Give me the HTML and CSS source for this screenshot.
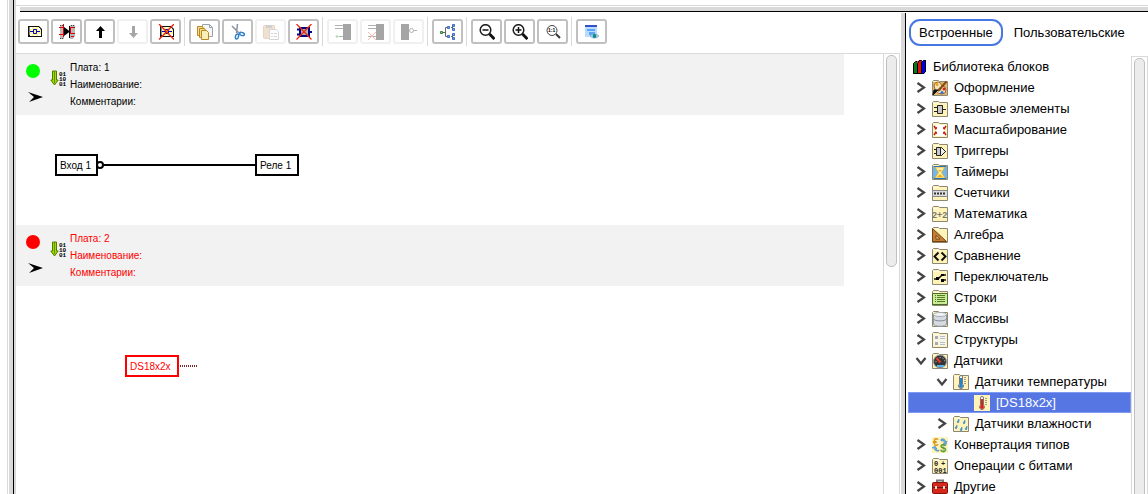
FILE: index.html
```html
<!DOCTYPE html>
<html lang="ru">

<head>
  <meta charset="UTF-8">
  <meta name="viewport" content="width=device-width, initial-scale=1.0">
  <title>Библиотека блоков</title>
  <link rel="stylesheet" href="styles.css">
</head>

<body>
  <!-- shared icon parts -->
  <svg class="defs" aria-hidden="true">
    <symbol id="folder" viewBox="0 0 16 16">
      <path d="M.5 15.5V1.5L1.5.5h5l1 1h8v14z" fill="#fff3b8" stroke="#8c8874" />
      <path d="M1.5 2.5h6" stroke="#fffbe6" />
    </symbol>
    <symbol id="board" viewBox="0 0 16 16">
      <path d="M2 2h11l3 3v8H2z" fill="#111" />
      <path d="M3 4h1M3 6h1M3 8h1M3 10h1M14 6h1M14 8h1M14 10h1" stroke="#fff" />
      <path d="M4 3h9v1l2 2v6H4z" fill="#fff6a0" />
      <path d="M4 3h2v2H4zM8 3h2v1H8zM12 4h2v2h-2zM4 10h2v2H4zM8 11h2v1H8zM12 10h3v2h-3z" fill="#fff" />
      <path d="M4 7.5h3M11 7.5h3M7.5 5.5h3v4h-3z" fill="none" stroke="#0000b8" />
    </symbol>
    <symbol id="download" viewBox="0 0 17 16">
      <path d="M2.500 1v9H.8L4.500 15l3.700-5H6.500V1z" fill="#a4dc00" stroke="#4b7d00" />
      <path d="M4.500 1v12" stroke="#5d9400" />
    </symbol>
    <symbol id="arrow" viewBox="0 0 15 10">
      <path d="M0 0l15 5L1 10l5-5z" />
    </symbol>
    <symbol id="closed" viewBox="0 0 16 16">
      <path d="M4.500 3L11 7.500 4.500 12" fill="none" stroke="#444" stroke-width="2.200" />
    </symbol>
    <symbol id="opened" viewBox="0 0 16 16">
      <path d="M3.500 5L8 10.500 12.500 5" fill="none" stroke="#444" stroke-width="2.200" />
    </symbol>
    <symbol id="lens" viewBox="0 0 16 16">
      <circle cx="6.500" cy="6" r="5.300" fill="#fff" stroke="#1b1b1b" stroke-width="1.500" />
      <path d="M10.500 10l5 5" stroke="#111" stroke-width="3" />
    </symbol>
    <symbol id="thermo" viewBox="0 0 16 16">
      <path d="M6.500 10V3a1.500 1.500 0 013 0v7a2.500 2.500 0 11-3 0z" fill="#fff" stroke="#777" />
      <path d="M8 4v7" stroke="currentColor" stroke-width="2" />
      <circle cx="8" cy="12" r="2" fill="currentColor" />
      <path d="M11 3.500h2M11 5.500h2M11 7.500h2M11 9.500h2" stroke="#999" />
    </symbol>
  </svg>

  <div class="rail"></div>
  <div class="page">
    <div class="top-edge"></div>
    <div class="content">
      <main class="workspace">
        <div class="toolbar">
          <div class="group">
            <button class="tool" aria-label="Добавить плату"><svg viewBox="0 0 16 16"><use href="#board" /></svg></button>
            <button class="tool" aria-label="Вставить плату">
              <svg viewBox="0 0 16 16">
                <path d="M1 1h4v5l-1 3 1 2v4H1zM11 1h5v11l-2 3h-3z" fill="#b8b8b8" />
                <path d="M1 1.500h4M1 14.500h3M12 1.500h3" stroke="#444" stroke-dasharray="1 1" />
                <path d="M5 3l6 4.500L5 12z" fill="#000" />
                <path d="M10.500 2v12" stroke="#000" />
                <path d="M4.500 0v13M0 3.500h4M0 10.500h4M16 3.500h-4.500v6H16M12 12.500h3" fill="none" stroke="#e00000" />
              </svg>
            </button>
            <button class="tool" aria-label="Вверх"><svg viewBox="0 0 16 16"><path d="M8.500 2l4.500 5h-3v7H7V7H4z" /></svg></button>
            <button class="tool" aria-label="Вниз" disabled><svg viewBox="0 0 16 16"><path d="M7 2h3v7h3l-4.500 5L4 9h3z" /></svg></button>
            <button class="tool" aria-label="Удалить плату">
              <svg viewBox="0 0 16 16"><use href="#board" /><path d="M1 0l15 15.500M16 0L1 15.500" stroke="#f02010" stroke-width="1.300" /></svg>
            </button>
          </div>
          <div class="group">
            <button class="tool" aria-label="Копировать">
              <svg viewBox="0 0 16 16">
                <path d="M5.500.5h7l3 3v9h-10z" fill="#f4f6f8" stroke="#9aa3ab" />
                <path d="M12.500.5v3h3" fill="none" stroke="#9aa3ab" />
                <path d="M.5 2.500h5l1 2v7h-6z" fill="#f6df8c" stroke="#b98822" />
                <path d="M2.500 4.500h5l1 2v7h-6z" fill="#f6df8c" stroke="#b98822" />
                <path d="M4.500 6.500h5l2 2v7h-7z" fill="#fbeeb4" stroke="#b98822" />
              </svg>
            </button>
            <button class="tool" aria-label="Вырезать">
              <svg viewBox="0 0 16 16">
                <path d="M2 2l7 7M7.500 0l-1 9" stroke="#8994a0" stroke-width="1.500" />
                <ellipse cx="12" cy="10" rx="2.500" ry="1.500" fill="none" stroke="#2f7fc8" stroke-width="1.500" transform="rotate(20 12 10)" />
                <ellipse cx="7" cy="12.500" rx="1.500" ry="2.500" fill="none" stroke="#2f7fc8" stroke-width="1.500" transform="rotate(15 7 12.500)" />
              </svg>
            </button>
            <button class="tool" aria-label="Вставить" disabled>
              <svg viewBox="0 0 16 16">
                <rect x=".5" y="1.500" width="11" height="13" rx="1" fill="#d7a878" stroke="#b98550" />
                <path d="M3 1h6v3H3z" fill="#777" />
                <path d="M6.500 5.500h7l2 2v8h-9z" fill="#fff" stroke="#888" />
                <path d="M8 9.500h2m1 0h3M8 12.500h2m1 0h3" stroke="#888" />
              </svg>
            </button>
            <button class="tool" aria-label="Удалить блок">
              <svg viewBox="0 0 16 16">
                <path d="M1 5.500h3M1 10.500h3M12 8h4" stroke="#000080" stroke-width="2" />
                <rect x="4" y="4" width="9" height="8" fill="#b0b0b0" stroke="#000080" stroke-width="2" />
                <path d="M.5 0l15 15.500M15.500 0L.5 15.500" stroke="#f02810" stroke-width="1.300" />
              </svg>
            </button>
          </div>
          <div class="group">
            <button class="tool" aria-label="Добавить вход" disabled>
              <svg viewBox="0 0 16 16"><path d="M8 0h8v16H8z" /><path d="M0 1.500h8M0 4.500h8M4 12.500h4" stroke="#222" /><path d="M.5 12.500h3M2 11v3" stroke="#1a8a1a" /></svg>
            </button>
            <button class="tool" aria-label="Удалить вход" disabled>
              <svg viewBox="0 0 16 16"><path d="M8 0h8v16H8z" /><path d="M0 1.500h8M0 4.500h8M0 12.500h8" stroke="#222" /><path d="M0 8l8 8M8 8l-8 8" stroke="#f03010" /></svg>
            </button>
            <button class="tool" aria-label="Инверсия" disabled>
              <svg viewBox="0 0 16 16"><path d="M0 0h8v16H0z" /><circle cx="10.500" cy="6.500" r="2" fill="#fff" stroke="#222" /><path d="M13 6.500h3" stroke="#222" /></svg>
            </button>
          </div>
          <div class="group">
            <button class="tool" aria-label="Структура">
              <svg viewBox="0 0 16 16">
                <path d="M3 8.500h2M9 3.500H5.500v9H9M12.500 2v4M12.500 10v5M11 3.500h1.500M11 12.500h1.500" fill="none" stroke="#666" />
                <path d="M.5 7.500h2v2h-2z" fill="#9c9" stroke="#2b8a3e" />
                <path d="M7.500 2.500h2v2h-2zM7.500 11.500h2v2h-2zM12.500.5h2v2h-2zM12.500 4.500h2v2h-2zM12.500 9.500h2v2h-2zM12.500 13.500h2v2h-2z" fill="#7fa8e8" stroke="#3a6cc0" />
              </svg>
            </button>
          </div>
          <div class="group">
            <button class="tool" aria-label="Уменьшить"><svg viewBox="0 0 16 16"><use href="#lens" /><path d="M3.500 6h6" stroke="#111" stroke-width="1.500" /></svg></button>
            <button class="tool" aria-label="Увеличить"><svg viewBox="0 0 16 16"><use href="#lens" /><path d="M3.500 6h6M6.500 3v6" stroke="#111" stroke-width="1.500" /></svg></button>
            <button class="tool" aria-label="Масштаб 1:1">
              <svg viewBox="0 0 16 16"><circle cx="7" cy="6.500" r="5" fill="#fff" stroke="#444" /><path d="M11 10l4 4" stroke="#333" stroke-width="2" /><text x="3" y="8" class="ratio">1:1</text></svg>
            </button>
          </div>
          <div class="group">
            <button class="tool" aria-label="Просмотр">
              <svg viewBox="0 0 16 16">
                <path d="M1 1h12v12H1z" fill="#b9dcff" /><path d="M1 1h12v2H1z" fill="#3550c8" />
                <path d="M3 5h8v2H3zM5 8h6v3H5z" fill="#58a6f5" />
                <path d="M6 12q4.500-4 9 0q-4.500 4-9 0" fill="#d7ecec" stroke="#8ab" /><circle cx="10.500" cy="12" r="2" fill="#078b94" />
              </svg>
            </button>
          </div>
        </div>

        <div class="canvas">
          <div class="boards">
            <section class="board">
              <header class="board-head">
                <div class="state"><span class="lamp"></span><svg class="pointer"><use href="#arrow" /></svg></div>
                <svg class="load" viewBox="0 0 17 16"><use href="#download" /><text x="9" y="6">01</text><text x="9" y="11">10</text><text x="9" y="16">01</text></svg>
                <div class="info"><p>Плата: 1</p><p>Наименование:</p><p>Комментарии:</p></div>
              </header>
              <div class="scheme">
                <div class="node input">Вход 1</div>
                <div class="wire"></div>
                <div class="inverter"></div>
                <div class="node relay">Реле 1</div>
              </div>
            </section>
            <section class="board error">
              <header class="board-head">
                <div class="state"><span class="lamp"></span><svg class="pointer"><use href="#arrow" /></svg></div>
                <svg class="load" viewBox="0 0 17 16"><use href="#download" /><text x="9" y="6">01</text><text x="9" y="11">10</text><text x="9" y="16">01</text></svg>
                <div class="info"><p>Плата: 2</p><p>Наименование:</p><p>Комментарии:</p></div>
              </header>
              <div class="scheme">
                <div class="node sensor">DS18x2x</div>
                <div class="stub"></div>
              </div>
            </section>
          </div>
          <div class="scroll"><div class="thumb"></div></div>
        </div>
      </main>

      <div class="splitter"></div>

      <aside class="library">
        <nav class="tabs">
          <button class="tab active">Встроенные</button>
          <button class="tab">Пользовательские</button>
        </nav>
        <div class="tree-wrap">
          <ul class="tree">
            <li><button class="row root">
              <svg class="icon" viewBox="0 0 16 16"><path d="M1 5l2-2h2v11l-3 1H1z" fill="#087818" /><path d="M5 4l2-3h3v12l-2 2H5z" fill="#e01010" /><path d="M9 3l3-2h2v11l-2 3H9z" fill="#0000e8" /><path d="M1.500 14.500v-10l2-2h2M5.500 14.500v-10l2-3h2M9.500 14.500V3.500l2-2h2v11l-2 2h-10" fill="none" stroke="#000" /></svg>
              Библиотека блоков</button></li>
            <li><button class="row"><svg class="fold"><use href="#closed" /></svg>
              <svg class="icon" viewBox="0 0 16 16"><use href="#folder" /><path d="M1 2h14v13H1z" fill="#dfb777" /><path d="M2 5q1-3 4-3t4 4q4 0 4 4t-4 4q-4 0-6-3t-2-6" fill="#f6e1ba" stroke="#9a6a2a" /><circle cx="8" cy="9" r="1.500" fill="#27a12e" /><circle cx="12" cy="9" r="1.500" fill="#e02020" /><circle cx="10" cy="12.500" r="1.500" fill="#2b70d8" /><circle cx="5" cy="4.500" r="1.500" fill="#f0a010" /><path d="M14.500 1.500L6 11" stroke="#8b4a12" stroke-width="2" /><path d="M6 10l-5 5 1-5z" fill="#111" stroke="#111" /></svg>
              Оформление</button></li>
            <li><button class="row"><svg class="fold"><use href="#closed" /></svg>
              <svg class="icon" viewBox="0 0 16 16"><use href="#folder" /><path d="M2 6.500h4M2 10.500h4M10 8.500h4" stroke="#222" /><path d="M5.500 4.500h5v8h-5z" fill="#c8c8c8" stroke="#222" /></svg>
              Базовые элементы</button></li>
            <li><button class="row"><svg class="fold"><use href="#closed" /></svg>
              <svg class="icon" viewBox="0 0 16 16"><use href="#folder" /><path d="M4 3h9v11H4z" fill="#fff" /><path d="M2 4l2 3M14 4l-2 3M2 13l2-3M14 13l-2-3" stroke="#c01818" stroke-width="1.500" /><path d="M4.500 5v2H3M11.500 5v2H13M4.500 12v-2H3M11.500 12v-2H13" fill="none" stroke="#d03030" /></svg>
              Масштабирование</button></li>
            <li><button class="row"><svg class="fold"><use href="#closed" /></svg>
              <svg class="icon" viewBox="0 0 16 16"><use href="#folder" /><path d="M2 6.500h3M2 10.500h3M12 8.500h2M4.500 4.500h5v8h-5z" fill="#c8c8c8" stroke="#222" /><path d="M8.500 4.500v8h1l4-4-4-4z" fill="#eee" stroke="#222" /></svg>
              Триггеры</button></li>
            <li><button class="row"><svg class="fold"><use href="#closed" /></svg>
              <svg class="icon" viewBox="0 0 16 16"><use href="#folder" /><path d="M1 2h14v13H1z" fill="#71b6e8" /><path d="M3 3h10L9.500 8.500 13 14H3l3.500-5.500z" fill="#fff0a8" stroke="#e6b32e" /><path d="M2 2.500h12M2 14.500h12" stroke="#2675bb" /><path d="M6 6h4L8 8zM5 13l3-3 3 3z" fill="#efae20" /></svg>
              Таймеры</button></li>
            <li><button class="row"><svg class="fold"><use href="#closed" /></svg>
              <svg class="icon" viewBox="0 0 16 16"><use href="#folder" /><path d="M0 5h16v7H0z" fill="#888" /><path d="M1 6h14v5H1z" fill="#ddd" /><path d="M2 8.500h12" stroke="#333" stroke-width="2" stroke-dasharray="2 1" /></svg>
              Счетчики</button></li>
            <li><button class="row"><svg class="fold"><use href="#closed" /></svg>
              <svg class="icon" viewBox="0 0 16 16"><use href="#folder" /><text x="0" y="12" class="sum">2+2</text></svg>
              Математика</button></li>
            <li><button class="row"><svg class="fold"><use href="#closed" /></svg>
              <svg class="icon" viewBox="0 0 16 16"><use href="#folder" /><path d="M.5 1.500v13h14z" fill="#c47d32" stroke="#75410d" /><path d="M4 8.500V12h4z" fill="#fff3b8" stroke="#75410d" /></svg>
              Алгебра</button></li>
            <li><button class="row"><svg class="fold"><use href="#closed" /></svg>
              <svg class="icon" viewBox="0 0 16 16"><use href="#folder" /><path d="M6.500 4.500l-4 4 4 4M9.500 4.500l4 4-4 4" fill="none" stroke="#111" stroke-width="2" /></svg>
              Сравнение</button></li>
            <li><button class="row"><svg class="fold"><use href="#closed" /></svg>
              <svg class="icon" viewBox="0 0 16 16"><use href="#folder" /><path d="M2 10h4l4-4M10 6h4M10 11h4" fill="none" stroke="#111" stroke-width="1.500" /><path d="M4 8h3v3H4zM9 5h3v2H9zM9 10h3v3H9z" /></svg>
              Переключатель</button></li>
            <li><button class="row"><svg class="fold"><use href="#closed" /></svg>
              <svg class="icon" viewBox="0 0 16 16"><use href="#folder" /><path d="M.5 3.500h15v11H.5z" fill="#cdea98" stroke="#496c26" /><path d="M3 5.500h1m1 0h8M3 7.500h1m1 0h8M3 9.500h1m1 0h8M3 11.500h1m1 0h8" stroke="#4f7e23" /></svg>
              Строки</button></li>
            <li><button class="row"><svg class="fold"><use href="#closed" /></svg>
              <svg class="icon" viewBox="0 0 16 16"><use href="#folder" /><path d="M1.500 3v10c0 3 13 3 13 0V3" fill="#d5dbe1" stroke="#929aa2" /><ellipse cx="8" cy="3.500" rx="6.500" ry="2" fill="#f1f4f7" stroke="#a4abb2" /><path d="M1.500 8c1 2.500 12 2.500 13 0" fill="none" stroke="#858d95" /></svg>
              Массивы</button></li>
            <li><button class="row"><svg class="fold"><use href="#closed" /></svg>
              <svg class="icon" viewBox="0 0 16 16"><use href="#folder" /><path d="M2 3h12v11H2z" fill="#f8f6e8" /><path d="M3 4h3v3H3zM3 10h3v3H3z" fill="#aaa" /><path d="M8 4.500h5M8 6.500h5M8 10.500h5M8 12.500h5" stroke="#b7bec5" /></svg>
              Структуры</button></li>
            <li><button class="row" aria-expanded="true"><svg class="fold"><use href="#opened" /></svg>
              <svg class="icon" viewBox="0 0 16 16"><use href="#folder" /><circle cx="8" cy="8.500" r="6.500" fill="#343638" stroke="#999" /><path d="M4 9a4.500 4.500 0 019 0" fill="none" stroke="#ddd" stroke-dasharray="1 2" /><path d="M8.500 9.500L4.500 5" stroke="#f03a20" stroke-width="2" /><path d="M5 12h7v2H5z" fill="#58b5ee" /></svg>
              Датчики</button></li>
            <li><button class="row level-2" aria-expanded="true"><svg class="fold"><use href="#opened" /></svg>
              <svg class="icon cold" viewBox="0 0 16 16"><use href="#folder" /><use href="#thermo" /></svg>
              Датчики температуры</button></li>
            <li><button class="row level-3 selected">
              <svg class="icon hot" viewBox="0 0 16 16"><path d="M0 0h16v16H0z" fill="#fff3b8" /><use href="#thermo" /></svg>
              [DS18x2x]</button></li>
            <li><button class="row level-2"><svg class="fold"><use href="#closed" /></svg>
              <svg class="icon" viewBox="0 0 16 16"><use href="#folder" /><path d="M6 3l-2 3 1 1 1-1zM12 4l-2 3 1 1 1-1zM4 9l-2 3 1 1 1-1zM9 11l-2 3 1 1 1-1zM14 10l-2 3 1 1 1-1z" fill="#4da3e8" stroke="#2579c4" stroke-width=".5" /></svg>
              Датчики влажности</button></li>
            <li><button class="row"><svg class="fold"><use href="#closed" /></svg>
              <svg class="icon" viewBox="0 0 16 16"><path d="M0 0h16v16H0z" fill="#fff3b8" /><text x="1" y="9" class="euro">€</text><text x="8" y="15" class="dollar">$</text><path d="M9 2q4-1 5 3l1-1-1 4-3-2h2q-1-3-4-2zM7 14q-4 1-5-3H0l3-2 2 3H4q1 2 3 1z" fill="#65aee8" stroke="#3c83bd" stroke-width=".5" /></svg>
              Конвертация типов</button></li>
            <li><button class="row"><svg class="fold"><use href="#closed" /></svg>
              <svg class="icon" viewBox="0 0 16 16"><use href="#folder" /><text x="2" y="8" class="bits">0</text><text x="9" y="8" class="bits">+</text><text x="2" y="15" class="bits">001</text></svg>
              Операции с битами</button></li>
            <li><button class="row"><svg class="fold"><use href="#closed" /></svg>
              <svg class="icon" viewBox="0 0 16 16"><path d="M5 4V1.500h6V4" fill="none" stroke="#777" stroke-width="2" /><rect x=".5" y="3.500" width="15" height="11" rx="1" fill="#d5281b" stroke="#861008" /><path d="M1 8.500h14" stroke="#721009" /><path d="M3 7h2v3H3zM11 7h2v3h-2z" fill="#ddd" /></svg>
              Другие</button></li>
          </ul>
          <div class="scroll"><div class="thumb"></div></div>
        </div>
      </aside>
    </div>
  </div>
</body>

</html>
```
FILE: styles.css
```css
* {
  box-sizing: border-box;
  margin: 0;
  padding: 0;
}

body {
  display: flex;
  height: 100vh;
  overflow: hidden;
  background: #fff;
  color: #000;
  font: 13px/21px "Liberation Sans", Arial, sans-serif;
}

button {
  border: 0;
  background: none;
  color: inherit;
  font: inherit;
}

ul {
  list-style: none;
}

.defs {
  position: absolute;
  width: 0;
  height: 0;
}

/* window edges */
.rail {
  flex: none;
  width: 7px;
  margin-left: 7px;
  border-left: 1px solid #d9d9d9;
  border-right: 1px solid #000;
  background: linear-gradient(90deg, #fff 1px, #d9d9d9 1px);
}

.page {
  display: flex;
  flex: 1;
  flex-direction: column;
  min-width: 0;
  border-left: 2px solid #d9d9d9;
}

.top-edge {
  flex: none;
  height: 7px;
  margin-top: 5px;
  border-top: 1px solid #d9d9d9;
}

.top-edge::after {
  content: '';
  display: block;
  height: 4px;
  margin: 1px 0 0 4px;
  border-bottom: 1px solid #000;
  background: #d9d9d9;
}

.content {
  display: flex;
  flex: 1;
  min-height: 0;
}

.workspace {
  display: flex;
  flex: 1;
  flex-direction: column;
  min-width: 0;
}

.splitter {
  flex: none;
  width: 5px;
  margin: 1px 0 0 1px;
  border-right: 1px solid #000;
  background: #d9d9d9;
}

/* toolbar */
.toolbar {
  display: flex;
  flex: none;
  height: 41px;
  padding: 5px 2px;
}

.group {
  display: flex;
  gap: 2px;
  height: 29px;
  padding: 2px 3px 2px 0;
}

.group + .group {
  padding-left: 4px;
  border-left: 1px solid #d9d9d9;
}

.tool {
  display: flex;
  align-items: center;
  justify-content: center;
  width: 31px;
  height: 25px;
  border: 2px solid #c0c0c0;
  border-radius: 3px;
}

.tool svg {
  width: 16px;
  height: 16px;
}

.tool:disabled {
  border-color: #f0f0f0;
}

.tool:disabled svg {
  opacity: .35;
}

.ratio {
  font: bold 5px "Liberation Sans", Arial, sans-serif;
}

/* boards */
.canvas {
  display: flex;
  flex: 1;
  min-height: 0;
  border-top: 1px solid #d9d9d9;
}

.boards {
  flex: 1;
  overflow: hidden;
}

.board-head {
  display: flex;
  height: 61px;
  margin-right: 39px;
  padding: 5px 8px;
  background: #f2f2f2;
}

.state {
  display: flex;
  flex-direction: column;
  align-items: center;
  gap: 14px;
  width: 18px;
  padding-top: 5px;
}

.lamp {
  width: 14px;
  height: 14px;
  border-radius: 50%;
  background: #0f0;
}

.error .lamp {
  background: #f00;
}

.pointer {
  width: 15px;
  height: 10px;
  margin-left: 4px;
}

.load {
  width: 17px;
  height: 16px;
  margin: 11px 3px 0 8px;
  overflow: visible;
  font: bold 6px "Liberation Mono", monospace;
}

.info {
  font-size: 10px;
  line-height: 17px;
}

.error .info {
  color: #f00;
}

.scheme {
  position: relative;
  height: 110px;
}

.node {
  position: absolute;
  height: 22px;
  padding: 0 3px;
  border: 2px solid #000;
  background: #fff;
  font-size: 10px;
  line-height: 19px;
  white-space: nowrap;
}

.input {
  left: 39px;
  top: 39px;
  width: 43px;
}

.relay {
  left: 239px;
  top: 39px;
  width: 44px;
}

.sensor {
  left: 109px;
  top: 69px;
  width: 54px;
  border-color: #f00;
  color: #f00;
}

.wire {
  position: absolute;
  left: 87px;
  top: 49px;
  width: 153px;
  height: 2px;
  background: #000;
}

.inverter {
  position: absolute;
  left: 80px;
  top: 46px;
  width: 8px;
  height: 8px;
  border: 2px solid #000;
  border-radius: 50%;
  background: #fff;
}

.stub {
  position: absolute;
  left: 164px;
  top: 79px;
  width: 17px;
  height: 2px;
  background: repeating-linear-gradient(90deg, #7a2c2c 0 1px, #fff 1px 2px);
}

/* scrollbars */
.scroll {
  flex: none;
  width: 17px;
  padding: 1px 2px;
  border: 1px solid #d9d9d9;
  border-width: 0 1px;
  overflow: hidden;
}

.thumb {
  width: 11px;
  height: 212px;
  border: 1px solid #c0c0c0;
  border-radius: 5px;
  background: #ececec;
}

/* block library */
.library {
  display: flex;
  flex: none;
  flex-direction: column;
  width: 242px;
  padding-left: 2px;
}

.tabs {
  display: flex;
  flex: none;
  gap: 1px;
  padding: 7px 1px 10px;
}

.tab {
  height: 27px;
  padding: 0 8px;
  border: 2px solid transparent;
  border-radius: 11px;
  white-space: nowrap;
}

.tab.active {
  border-color: #4677e2;
}

.tree-wrap {
  display: flex;
  flex: 1;
  min-height: 0;
}

.tree {
  flex: 1;
  overflow: hidden;
}

.tree-wrap .scroll {
  border-top-width: 1px;
}

.tree-wrap .thumb {
  height: 110%;
}

.row {
  display: flex;
  align-items: center;
  width: 100%;
  height: 21px;
  padding-left: 5px;
  text-align: left;
  white-space: nowrap;
}

.root {
  padding-left: 4px;
}

.level-2 {
  padding-left: 26px;
}

.selected {
  border: 1px solid #7f9af2;
  background: #5677e3;
  color: #fff;
}

.level-3 {
  padding-left: 65px;
}

.fold {
  width: 16px;
  height: 16px;
  margin-right: 3px;
}

.icon {
  width: 16px;
  height: 16px;
  margin-right: 6px;
}

.root .icon {
  margin-right: 5px;
}

.cold {
  color: #2684cf;
}

.hot {
  color: #d82318;
}

.sum {
  font: bold 9px "Liberation Sans", Arial, sans-serif;
  fill: #777;
}

.euro {
  font: bold 10px "Liberation Sans", Arial, sans-serif;
  fill: #d59218;
}

.dollar {
  font: bold 11px "Liberation Sans", Arial, sans-serif;
  fill: #559c35;
}

.bits {
  font: bold 7px "Liberation Mono", monospace;
  fill: #222;
}
```
